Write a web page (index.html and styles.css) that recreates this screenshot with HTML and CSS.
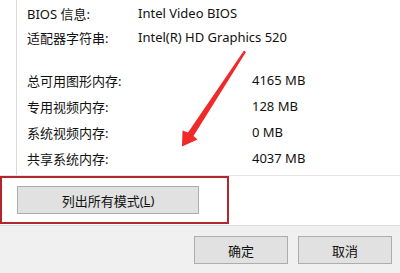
FILE: index.html
```html
<!DOCTYPE html>
<html lang="zh-CN">
<head>
<meta charset="utf-8">
<title>适配器属性</title>
<link rel="stylesheet" href="styles.css">
</head>
<body>
<div class="page">
  <div class="info">
    <div class="panel">
      <div class="group top">
        <div class="row"><span class="label">BIOS 信息:</span><span class="value">Intel Video BIOS</span></div>
        <div class="row"><span class="label">适配器字符串:</span><span class="value">Intel(R) HD Graphics 520</span></div>
      </div>
      <div class="group mem">
        <div class="row"><span class="label">总可用图形内存:</span><span class="value">4165 MB</span></div>
        <div class="row"><span class="label">专用视频内存:</span><span class="value">128 MB</span></div>
        <div class="row"><span class="label">系统视频内存:</span><span class="value">0 MB</span></div>
        <div class="row"><span class="label">共享系统内存:</span><span class="value">4037 MB</span></div>
      </div>
    </div>
  </div>
  <div class="modes">
    <button class="btn wide">列出所有模式(<u>L</u>)</button>
  </div>
  <div class="footer">
    <button class="btn">确定</button>
    <button class="btn">取消</button>
  </div>
  <div class="highlight"></div>
  <svg class="arrow" width="400" height="273" viewBox="0 0 400 273">
    <polygon points="244,50.5 246,52 193.5,136 197.5,139.5 182,146.5 182.5,130.5 188,132.5" fill="#ef2a2a"/>
  </svg>
</div>
</body>
</html>
```
FILE: styles.css
```css
html, body {
  margin: 0;
  padding: 0;
  background: #ffffff;
}
.page {
  position: relative;
  width: 400px;
  height: 273px;
  overflow: hidden;
  font-family: "Noto Sans", "Noto Sans CJK SC", sans-serif;
  font-size: 13px;
  color: #111;
  background: #fff;
}
.info {
  height: 175px;
  border-bottom: 1px solid #e4e4e4;
  padding-left: 16px;
}
.panel {
  height: 175px;
  border-left: 1px solid #d9d9d9;
  padding-left: 10px;
  box-sizing: border-box;
}
.group.top {
  padding-top: 1px;
}
.group.top .row {
  height: 24px;
  display: grid;
  grid-template-columns: 111px auto;
  align-items: center;
}
.group.mem {
  margin-top: 18px;
}
.group.mem .row {
  height: 26px;
  display: grid;
  grid-template-columns: 225px auto;
  align-items: center;
}
.label, .value {
  white-space: nowrap;
}
.modes {
  height: 49px;
  box-sizing: border-box;
  padding: 10px 0 0 17px;
}
.btn {
  font-family: "Noto Sans", "Noto Sans CJK SC", sans-serif;
  font-size: 13px;
  color: #111;
  background: #e1e1e1;
  border: 1px solid #adadad;
  height: 28px;
  width: 94px;
  padding: 0;
  margin: 0;
  display: flex;
  align-items: center;
  justify-content: center;
}
.btn.wide {
  width: 182px;
}
.footer {
  height: 48px;
  background: #f0f0f0;
  border-top: 1px solid #dfdfdf;
  display: flex;
  justify-content: flex-end;
  gap: 10px;
  padding: 10px 8px 0 0;
  box-sizing: border-box;
}
.highlight {
  position: absolute;
  left: 0;
  top: 176px;
  width: 229px;
  height: 48px;
  box-sizing: border-box;
  border: 2px solid #b5262c;
}
.arrow {
  position: absolute;
  left: 0;
  top: 0;
}
```
